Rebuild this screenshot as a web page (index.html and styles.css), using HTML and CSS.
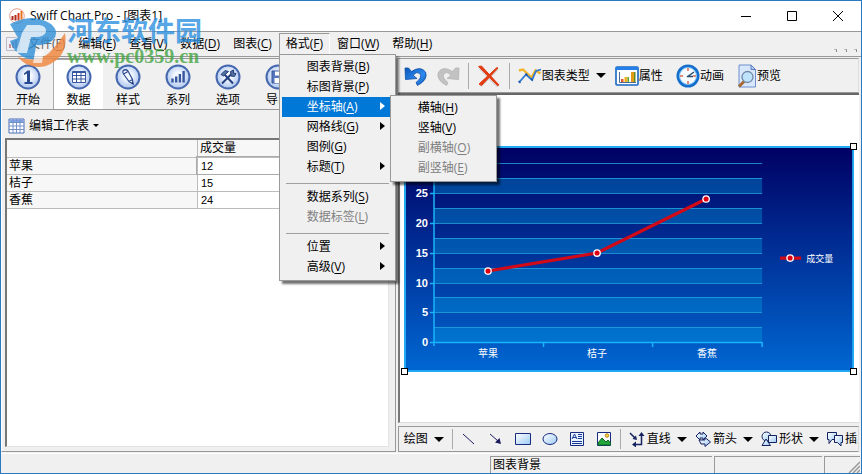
FILE: index.html
```html
<!DOCTYPE html>
<html lang="zh-CN">
<head>
<meta charset="utf-8">
<title>Swiff Chart Pro - [图表1]</title>
<link rel="stylesheet" href="styles.css">
</head>
<body>
<svg width="0" height="0" class="defs" aria-hidden="true">
  <defs>
    <radialGradient id="orb" cx=".5" cy=".45" r=".55"><stop offset=".3" stop-color="#f4f8ff"/><stop offset="1" stop-color="#a9c3ee"/></radialGradient>
    <linearGradient id="pale" x2="1" y2="1"><stop offset="0" stop-color="#fff"/><stop offset="1" stop-color="#9ccaf4"/></linearGradient>
    <linearGradient id="navy" x2="0" y2="1"><stop offset="0" stop-color="#000063"/><stop offset="1" stop-color="#0067d2"/></linearGradient>
    <linearGradient id="arrowBlue" x2="1" y2="1"><stop offset="0" stop-color="#0b55b8"/><stop offset=".6" stop-color="#2f8cf0"/><stop offset="1" stop-color="#0a57bd"/></linearGradient>
  </defs>
</svg>
<div class="window">
  <header class="titlebar">
    <svg class="app-icon" viewBox="0 0 16 16"><circle cx="8" cy="8" r="7.3" fill="#fff" stroke="#e4a08b"/><path d="M3.500 12V8M6.500 12.500V7" stroke="#b02a1c" stroke-width="2"/><path d="M9.500 12.500V5" stroke="#cf3a1a" stroke-width="2"/><path d="M12.500 11.500V3" stroke="#e8731c" stroke-width="2"/></svg>
    <h1>Swiff Chart Pro - [图表1]</h1>
    <div class="win-buttons">
      <button aria-label="最小化"><svg viewBox="0 0 12 12"><path d="M1 6.500h10" stroke="#000"/></svg></button>
      <button aria-label="最大化"><svg viewBox="0 0 12 12"><path d="M1.500 1.500h9v9h-9z" fill="none" stroke="#000"/></svg></button>
      <button aria-label="关闭"><svg viewBox="0 0 12 12"><path d="M1 1l10 10M11 1L1 11" stroke="#000"/></svg></button>
    </div>
  </header>

  <nav class="menubar">
    <svg class="doc-icon" viewBox="0 0 16 16"><path d="M1.500 1.500h10l3 3v10h-13z" fill="#eef" stroke="#99a"/><path d="M5 12V8M8 12V6M11 12V4" stroke="#a55" stroke-width="2"/></svg>
    <button class="faded">文件(<u>F</u>)</button>
    <button>编辑(<u>E</u>)</button>
    <button>查看(<u>V</u>)</button>
    <button>数据(<u>D</u>)</button>
    <button>图表(<u>C</u>)</button>
    <div class="menu-open">
      <button class="active">格式(<u>F</u>)</button>
      <div class="dropdown">
        <button>图表背景(<u>B</u>)</button>
        <button>标图背景(<u>P</u>)</button>
        <div class="has-sub">
          <button class="more selected">坐标轴(<u>A</u>)</button>
          <div class="dropdown submenu">
            <button>横轴(<u>H</u>)</button>
            <button>竖轴(<u>V</u>)</button>
            <button disabled>副横轴(<u>O</u>)</button>
            <button disabled>副竖轴(<u>E</u>)</button>
          </div>
        </div>
        <button class="more">网格线(<u>G</u>)</button>
        <button>图例(<u>G</u>)</button>
        <button class="more">标题(<u>T</u>)</button>
        <hr>
        <button>数据系列(<u>S</u>)</button>
        <button disabled>数据标签(<u>L</u>)</button>
        <hr>
        <button class="more">位置</button>
        <button class="more">高级(<u>V</u>)</button>
      </div>
    </div>
    <button>窗口(<u>W</u>)</button>
    <button>帮助(<u>H</u>)</button>
    <span class="mdi"><i></i><i></i><i></i></span>
  </nav>

  <main class="workspace">
    <section class="side">
      <div class="tabs">
        <button><svg viewBox="0 0 26 26"><circle cx="13" cy="13" r="11.500" fill="url(#orb)" stroke="#4668ae" stroke-width="2"/><path d="M9 9.500l3.500-3H15V18h2.500v2h-8v-2H12V9.500l-3 1.500z" fill="#294a91"/></svg>开始</button>
        <button class="current"><svg viewBox="0 0 26 26"><circle cx="13" cy="13" r="11.500" fill="url(#orb)" stroke="#4668ae" stroke-width="2"/><path d="M6.500 7.500h13v11h-13z" fill="#fff"/><path d="M6.500 7.500h13v11h-13zM6.500 8.500h13M6.500 11.500h13M6.500 15h13M10.500 8v10.500M15 8v10.500" fill="none" stroke="#36579d"/></svg>数据</button>
        <button><svg viewBox="0 0 26 26"><circle cx="13" cy="13" r="11.500" fill="url(#orb)" stroke="#4668ae" stroke-width="2"/><path d="M8 7q2.500-2.500 5 0l4.500 8.500.5 4.500-4-2.500L8.500 10q-1-1.500-.5-3zM8.500 10l4.500-2.500M14 17.500l3.500-2" fill="#f3f7ff" stroke="#2d4c90" stroke-width="1.200"/><path d="M16.500 19l2 1.500-.5-3z" fill="#1b3267"/></svg>样式</button>
        <button><svg viewBox="0 0 26 26"><circle cx="13" cy="13" r="11.500" fill="url(#orb)" stroke="#4668ae" stroke-width="2"/><path d="M7.500 18.500v-4M11.200 18.500v-6M14.900 18.500v-8.500M18.600 18.500V7" stroke="#36579d" stroke-width="2.400"/></svg>系列</button>
        <button><svg viewBox="0 0 26 26"><circle cx="13" cy="13" r="11.500" fill="url(#orb)" stroke="#4668ae" stroke-width="2"/><path d="M7 19.500l9-9M9 10l9 9.500" stroke="#233f7d" stroke-width="2"/><path d="M6 10.500l4-4 3.500 1-5 4.500zM15.500 7.500l3-1.500v3l2.500.5-1.500 3-3.500-.500z" fill="#54709f" stroke="#233f7d"/></svg>选项</button>
        <button><svg viewBox="0 0 26 26"><circle cx="13" cy="13" r="11.500" fill="url(#orb)" stroke="#4668ae" stroke-width="2"/><path d="M7 7h10.500l2 2v10H7z" fill="#5878bd" stroke="#36579d"/><path d="M10 7.500h6v4h-6zM9.500 14h7.500v5H9.500z" fill="#fff"/></svg>导出</button>
      </div>
      <div class="sheet-bar">
        <button><svg viewBox="0 0 17 16"><path d="M1 1h15v14H1z" fill="#fff" stroke="#4a6db5"/><path d="M1.500 1.500h14v3h-14z" fill="#7da1e0"/><path d="M1 4.500h15M1 8h15M1 11.500h15M5 1v14M8.500 1v14M12 1v14" stroke="#7492c8"/></svg>编辑工作表<span class="caret small"></span></button>
      </div>
      <div class="sheet">
        <table>
          <thead><tr><th></th><th>成交量</th></tr></thead>
          <tbody>
            <tr><th>苹果</th><td class="cursor">12</td></tr>
            <tr><th>桔子</th><td>15</td></tr>
            <tr><th>香蕉</th><td>24</td></tr>
          </tbody>
        </table>
      </div>
    </section>

    <section class="stage">
      <div class="toolbar">
        <button aria-label="撤销"><svg class="i24" viewBox="0 0 24 24"><path d="M1 4l.5 11.500L13 14.500l-4-3.300q3.500-4 6.500-2 3.500 4-3.500 9.300l1.500 3q11-6 8-13.500-5-6.500-14-.5L4.500 4z" fill="url(#arrowBlue)" stroke="#0b4da5" stroke-width=".8"/></svg></button>
        <button aria-label="重做" disabled><svg class="i24" viewBox="0 0 24 24"><path d="M23 4l-.5 11.500L11 14.500l4-3.300q-3.500-4-6.500-2-3.500 4 3.500 9.300l-1.500 3q-11-6-8-13.500 5-6.500 14-.5L19.500 4z" fill="#c2c2c2" stroke="#b4b4b4" stroke-width=".8"/></svg></button>
        <span class="sep"></span>
        <button aria-label="删除"><svg class="i24" viewBox="0 0 24 24"><path d="M3 4l18 18.500M20.500 4.500L3.500 22" fill="none" stroke="#b3b3b3" stroke-width="3" opacity=".5"/><path d="M1.500 2.500l3-.5 17.500 19-1.500.5zM20 3.500l1 .5L4.500 21.500 2 20z" fill="#e23c12" stroke="#e23c12"/></svg></button>
        <span class="sep"></span>
        <button class="labelled type"><svg class="i24" viewBox="0 0 24 24"><path d="M1 6.500l4-1 8.500 8 4-7 5 3" fill="none" stroke="#f1b52d" stroke-width="2.400"/><path d="M1 18.500l7-8 6 5.500 4-9 5-1.500" fill="none" stroke="#2f76cf" stroke-width="1.800"/><path d="M1 18.500l1-1M8 11l1-1M13.500 16l1-1" stroke="#1955a8" stroke-width="2.500"/></svg>图表类型<span class="caret"></span></button>
        <button class="labelled"><svg class="i24" viewBox="0 0 24 24"><rect x="1" y="3" width="22" height="18" rx="1" fill="#fff" stroke="#1766c2" stroke-width="1.600"/><path d="M1 3h22v3H1z" fill="#2480e8"/><path d="M4.500 8v10.500H21" fill="none" stroke="#4b6c94"/><path d="M6 15h2.500v3H6z" fill="#e0552a"/><path d="M9.500 13h3v5h-3z" fill="#f0b020"/><path d="M12.500 13H14v5h-1.500z" fill="#5cab3a"/><path d="M16 8h3v10h-3z" fill="#e39a18"/><path d="M19 8h1.500v10H19z" fill="#5c8f24"/></svg>属性</button>
        <button class="labelled"><svg class="i24" viewBox="0 0 24 24"><circle cx="12" cy="12" r="10" fill="#f5fbff" stroke="#146fcd" stroke-width="3"/><circle cx="12" cy="12" r="8.500" fill="none" stroke="#7cc0f5"/><path d="M12 4v3M12 17v3M4 12h3M17 12h3" stroke="#e06a4c" stroke-width="1.500"/><path d="M11 13l7-5M11 12.500h6" fill="none" stroke="#2a4d6e" stroke-width="1.500"/></svg>动画</button>
        <button class="labelled"><svg class="i24 narrow" viewBox="0 0 20 24"><path d="M2 1h12l4.500 4.500V23H2z" fill="#d9e7fc" stroke="#6d8fd0"/><path d="M14 1v4.500h4.500z" fill="#bfd3f5" stroke="#5577bd"/><path d="M7.500 17L2 22.500" stroke="#a66a34" stroke-width="3"/><circle cx="10.500" cy="13" r="5.500" fill="#bfe3fb" stroke="#7189a8" stroke-width="1.300"/></svg>预览</button>
      </div>

      <div class="canvas">
        <div class="chart">
          <svg viewBox="0 0 450 226" role="img" aria-label="成交量">
            <rect x="1" y="1" width="448" height="224" fill="url(#navy)" stroke="#22aaf2" stroke-width="2"/>
            <g fill="#00a0e0" fill-opacity=".36">
              <path d="M30 32h328v15H30zM30 62h328v15H30zM30 92h328v15H30zM30 122h328v15H30zM30 151h328v15H30zM30 181h328v15H30z"/>
            </g>
            <path d="M30 17.500h328M30 32.500h328M30 47.500h328M30 62.500h328M30 77.500h328M30 92.500h328M30 107.500h328M30 122.500h328M30 137.500h328M30 151.500h328M30 166.500h328M30 181.500h328" stroke="#1fa4de" stroke-opacity=".8"/>
            <path d="M30 10V200M26 196.500H358M139.500 196v5M248.500 196v5M358 196v5M26 17.500h4M26 47.500h4M26 77.500h4M26 107.500h4M26 137.500h4M26 166.500h4" fill="none" stroke="#19b4fb" stroke-width="1.500"/>
            <g class="axis"><text x="24" y="51">25</text><text x="24" y="81">20</text><text x="24" y="111">15</text><text x="24" y="141">10</text><text x="24" y="170">5</text><text x="24" y="200">0</text></g>
            <g class="cats"><text x="84" y="211">苹果</text><text x="193" y="211">桔子</text><text x="303" y="211">香蕉</text></g>
            <path d="M84 125l109-18 109-54M376 112h21" fill="none" stroke="#d20a18" stroke-width="3.200"/>
            <g fill="#e00012" stroke="#fff" stroke-width="1.300"><circle cx="84" cy="125" r="3.200"/><circle cx="193" cy="107" r="3.200"/><circle cx="302" cy="53" r="3.200"/><circle cx="386" cy="112" r="3.200"/></g>
            <text class="legend" x="402" y="116">成交量</text>
          </svg>
          <i class="handle tl"></i><i class="handle tr"></i><i class="handle bl"></i><i class="handle br"></i>
        </div>
      </div>

      <div class="drawbar">
        <button class="labelled">绘图<span class="caret"></span></button>
        <span class="sep"></span>
        <button aria-label="线"><svg viewBox="0 0 16 16"><path d="M2 3l11 10" stroke="#1b1b5e"/></svg></button>
        <button aria-label="箭头线"><svg viewBox="0 0 16 16"><path d="M2 3l8 7" stroke="#1b1b5e"/><path d="M13 13l-6-1.500 4.500-4.500z" fill="#1b1b5e"/></svg></button>
        <button aria-label="矩形"><svg viewBox="0 0 16 16"><path d="M.500 2.500h15v11H.500z" fill="url(#pale)" stroke="#172c80"/></svg></button>
        <button aria-label="椭圆"><svg viewBox="0 0 16 16"><ellipse cx="8" cy="8" rx="7" ry="5.500" fill="url(#pale)" stroke="#172c80"/></svg></button>
        <button aria-label="文本"><svg viewBox="0 0 16 16"><path d="M1.500 1.500h13v13h-13z" fill="#e8f3ff" stroke="#172c80"/><path d="M3 8l2.500-5L8 8M4 6.500h3M9 3.500h4M9 5.500h4M9 7.500h4M3 10.500h10M3 12.500h10" fill="none" stroke="#173a9a"/></svg></button>
        <button aria-label="图片"><svg viewBox="0 0 16 16"><path d="M1.500 1.500h13v13h-13z" fill="#fff" stroke="#172c80"/><path d="M2 12l4-5 4 4 2-2 2.500 3v2H2z" fill="#22a53a" stroke="#0c6620"/><circle cx="11" cy="4.500" r="1.700" fill="#ffe04a" stroke="#b67d10"/></svg></button>
        <span class="sep"></span>
        <button class="labelled shape"><svg viewBox="0 0 16 16"><path d="M1 2l5 5M6 13.500h6.500V3" fill="none" stroke="#16215f" stroke-width="1.500"/><path d="M8 9L3.500 8 7 4.500zM3 13.500l4-3v6zM12.500 1l3 4h-6z" fill="#16215f"/></svg>直线<span class="caret"></span></button>
        <button class="labelled shape"><svg viewBox="0 0 16 16"><path d="M1 5l4-4v2h3V1l4 4-4 4V7H5v2z" fill="url(#pale)" stroke="#16215f"/><path d="M4 9h6V6.500L15.500 11 10 15.500V13H6z" fill="url(#pale)" stroke="#16215f"/></svg>箭头<span class="caret"></span></button>
        <button class="labelled shape"><svg viewBox="0 0 16 16"><circle cx="5.500" cy="5.500" r="4.500" fill="url(#pale)" stroke="#16215f"/><path d="M7.500 4.500h8v7h-8z" fill="url(#pale)" stroke="#16215f"/><path d="M1 14.500L5 8l4.500 6.500z" fill="url(#pale)" stroke="#16215f"/></svg>形状<span class="caret"></span></button>
        <button class="labelled shape"><svg viewBox="0 0 16 16"><path d="M.500 1.500h9v7H5l-3 4V8.500H.500z" fill="url(#pale)" stroke="#16215f"/><path d="M7.500 4.500h8v7H14v3.500l-3.500-3.500h-3z" fill="url(#pale)" stroke="#16215f"/></svg>插入<span class="caret"></span></button>
      </div>
    </section>
  </main>

  <footer class="status">
    <span></span><span class="cell">图表背景</span><span class="cell"></span><span class="cell"></span>
    <svg class="grip" viewBox="0 0 12 12"><path d="M1 12L12 1M5 12l7-7M9 12l3-3" stroke="#999" stroke-width="1.500"/></svg>
  </footer>

  <div class="watermark">
    <svg viewBox="0 0 60 52"><path d="M3 9Q26-3 44 9q9 8 2 16-7 6-17 5l-2 15Q8 42 3 26l8-3Q7 16 3 9z" fill="#2f8fd8"/><path d="M20 10h12q8 1 7 7-2 5-10 5h-5l-4 16H9l6-20z" fill="#fff" fill-opacity=".75"/><path d="M58 18q4 24-19 33-18 4-28-9 20 7 32-5 8-8 15-19z" fill="#f0843c"/><path d="M28 37l9-2-2 13h-9z" fill="#fff" fill-opacity=".7"/></svg>
    <div><strong>河东软件园</strong><em>www.pc0359.cn</em></div>
  </div>
</div>
</body>
</html>
```
FILE: styles.css
```css
* { box-sizing: border-box; }
body {
  margin: 0;
  font: 12px/16px "Open Sans", "Noto Sans CJK SC", sans-serif;
  color: #000;
}
button {
  font: inherit;
  color: inherit;
  background: none;
  border: 0;
  padding: 0;
  white-space: nowrap;
}
svg { display: block; flex: none; }
.defs { position: absolute; }
u { text-underline-offset: 2px; }

.window {
  position: relative;
  display: flex;
  flex-direction: column;
  min-height: 100vh;
  border: 1px solid #2a78bd;
  background: #f0f0f0;
  overflow: hidden;
}

.titlebar {
  display: flex;
  align-items: center;
  height: 30px;
  padding-left: 8px;
  gap: 5px;
  background: #fff;
}
.titlebar h1 { flex: 1; margin: 0; font-size: 12px; font-weight: 400; }
.app-icon { width: 16px; height: 16px; }
.win-buttons { display: flex; }
.win-buttons button { display: grid; place-items: center; width: 46px; height: 28px; }
.win-buttons svg { width: 12px; height: 12px; }

.menubar {
  display: flex;
  align-items: stretch;
  gap: 1px;
  height: 26px;
  padding: 1px 4px 2px 3px;
  border-top: 1px solid #999;
  border-bottom: 1px solid #999;
}
.doc-icon { width: 16px; height: 16px; margin: 3px 0 0 1px; opacity: .6; }
.menubar > button, .menubar .active { padding: 0 6px; }
.menubar .faded { color: #555; }
.menu-open { position: relative; display: flex; z-index: 5; }
.menubar .active { border: 1px solid #999; border-right-color: #fff; border-bottom: 0; }
.mdi { display: flex; gap: 7px; margin: 0 0 2px auto; align-items: flex-end; }
.mdi i { width: 3px; height: 3px; border-right: 1px solid #888; border-top: 1px solid #bbb; }

.dropdown {
  position: absolute;
  left: 0;
  top: 100%;
  width: 117px;
  padding: 2px 2px 3px;
  background: #f0f0f0;
  border: 1px solid #999;
  box-shadow: 3px 3px 2px rgba(0, 0, 0, .55);
}
.dropdown button {
  position: relative;
  display: block;
  width: 100%;
  height: 20px;
  padding-left: 25px;
  text-align: left;
}
.dropdown button:disabled { color: #808080; }
.dropdown .more::after {
  content: "";
  position: absolute;
  right: 8px;
  top: 5px;
  border: 4px solid transparent;
  border-left: 5px solid #000;
  border-right: 0;
}
.dropdown .selected { background: #0078d7; color: #fff; }
.dropdown .selected::after { border-left-color: #fff; }
.dropdown hr { height: 1px; margin: 6px 4px 3px; border: 0; background: #a0a0a0; }
.has-sub { position: relative; }
.submenu { left: 108px; top: -2px; width: 107px; }

.workspace { display: flex; flex: 1; min-height: 0; padding: 1px 2px 1px 0; }

.side {
  display: flex;
  flex: 46 1 0;
  flex-direction: column;
  min-width: 0;
  margin-right: 2px;
  border: 1px solid #999;
  border-left-color: #fff;
}
.tabs { display: flex; height: 51px; border-bottom: 1px solid #999; overflow: hidden; padding-left: 1px; }
.tabs button {
  display: flex;
  flex: none;
  flex-direction: column;
  align-items: center;
  gap: 2px;
  width: 50px;
  padding-top: 5px;
}
.tabs .current { background: #fff; border-left: 1px solid #aaa; border-top: 1px solid #aaa; padding-top: 4px; }
.tabs svg { width: 26px; height: 26px; }
.sheet-bar { display: flex; align-items: center; height: 28px; padding: 3px 6px 0; }
.sheet-bar button { display: flex; align-items: center; gap: 4px; }
.sheet-bar svg { width: 17px; height: 16px; }

.sheet {
  flex: 1;
  margin: 0 6px 4px 3px;
  background: #fff;
  border: 1px solid #e3e3e3;
  border-top: 2px solid #777;
  border-left: 2px solid #777;
}
table { width: 100%; border-collapse: collapse; table-layout: fixed; }
th, td {
  height: 17px;
  padding: 0 2px;
  line-height: 16px;
  font-weight: 400;
  text-align: left;
  vertical-align: middle;
  border-bottom: 1px solid #bcbcbc;
}
th { background: #f7f7f7; }
tr > :first-child { width: 50%; border-right: 1px solid #bcbcbc; }
td { font-family: "Liberation Sans", sans-serif; font-size: 11px; padding-left: 3px; }
td.cursor { outline: 1px solid #aaa; }

.stage { display: flex; flex: 54 1 0; flex-direction: column; min-width: 0; }
.toolbar, .drawbar {
  display: flex;
  align-items: center;
  border: 1px solid #999;
  border-right-color: #ddd;
  overflow: hidden;
}
.toolbar { height: 35px; padding-left: 5px; gap: 8px; border-left-color: #fff; }
.labelled { display: flex; align-items: center; }
.toolbar .labelled { margin-right: 5px; }
.toolbar .type { margin-right: 1px; }
.i24 { width: 24px; height: 24px; }
.i24.narrow { width: 20px; }
.sep { flex: none; width: 1px; height: 26px; background: #aaa; }
.caret {
  margin-left: 6px;
  border: 5px solid transparent;
  border-top-color: #000;
  border-bottom: 0;
}
.caret.small { margin-left: 0; border-width: 3px 3px 0; }

.canvas {
  flex: 1;
  margin-bottom: 3px;
  padding: 51px 5px 0 4px;
  background: #fff;
  border-top: 2px solid #666;
  border-left: 2px solid #777;
  border-bottom: 1px solid #ddd;
}
.chart { position: relative; }
.chart svg { width: 100%; height: auto; }
.axis { font: bold 11px "Liberation Sans", sans-serif; fill: #fff; text-anchor: end; }
.cats { font: 10px "Noto Sans CJK SC", sans-serif; fill: #fff; text-anchor: middle; }
.legend { font: 9px "Noto Sans CJK SC", sans-serif; fill: #fff; }
.handle { position: absolute; width: 7px; height: 7px; background: #fff; border: 1px solid #000; }
.tl, .tr { top: -3px; }
.bl, .br { bottom: -3px; }
.tl, .bl { left: -3px; }
.tr, .br { right: -3px; }

.drawbar { height: 26px; padding-left: 5px; gap: 11px; }
.drawbar > * { flex: none; }
.drawbar svg { width: 16px; height: 16px; }
.drawbar .sep { height: 20px; margin: 0 -3px; }
.drawbar .shape { gap: 2px; margin-right: -3px; }
.drawbar .shape .caret { margin-left: 4px; }

.status {
  position: relative;
  display: grid;
  grid-template-columns: 1fr 222px 108px 36px;
  gap: 2px;
  height: 20px;
  padding: 2px 1px 1px 0;
  border-top: 1px solid #fff;
}
.cell { padding-left: 2px; border-left: 1px solid #999; border-top: 1px solid #999; }
.grip { position: absolute; right: 1px; bottom: 0; width: 12px; height: 12px; }

.watermark {
  position: absolute;
  left: 6px;
  top: 14px;
  z-index: 4;
  display: flex;
  pointer-events: none;
  opacity: .8;
}
.watermark > svg { width: 60px; height: 52px; }
.watermark strong, .watermark em { display: block; font-style: normal; }
.watermark strong { font: 700 27px/30px "Noto Sans CJK SC", sans-serif; color: #2e90e0; }
.watermark em { font: 700 20px/22px "Liberation Serif", serif; color: #45a545; }
```
